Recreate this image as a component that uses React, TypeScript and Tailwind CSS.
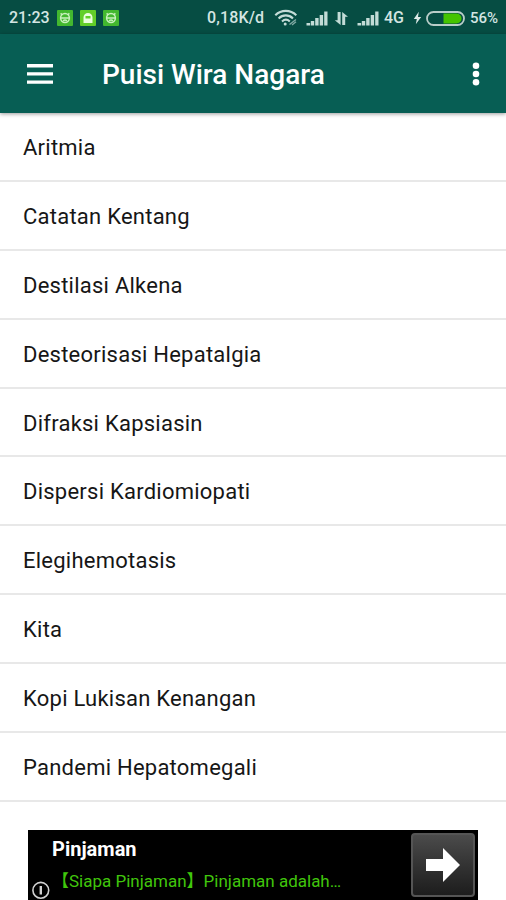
const POEMS = [
  "Aritmia",
  "Catatan Kentang",
  "Destilasi Alkena",
  "Desteorisasi Hepatalgia",
  "Difraksi Kapsiasin",
  "Dispersi Kardiomiopati",
  "Elegihemotasis",
  "Kita",
  "Kopi Lukisan Kenangan",
  "Pandemi Hepatomegali",
];

function FaceIcon() {
  return (
    <svg width="16" height="16" viewBox="0 0 16 16" fill="none">
      <rect width="16" height="16" rx="1" fill="#43b82f" />
      <g stroke="#c9f0be" strokeWidth="1.5">
        <path d="M3.6 3.4 5.4 5M12.4 3.4 10.6 5" />
        <circle cx="8" cy="8" r="4.4" />
        <path d="M3.5 8h9M6.2 11c.8-1.2 2.8-1.2 3.6 0" />
      </g>
    </svg>
  );
}

function GhostIcon() {
  return (
    <svg width="16" height="16" viewBox="0 0 16 16">
      <rect width="16" height="16" rx="1" fill="#62cf28" />
      <path d="M3.5 13V7.5a4.5 4.5 0 0 1 9 0V13z" fill="#eaffdc" />
      <path d="M5.5 6h5v2.5h-5z" fill="#62cf28" />
    </svg>
  );
}

function WifiIcon() {
  return (
    <svg width="24" height="18" viewBox="0 0 24 18" fill="none" stroke="#c3dcd7">
      <path
        d="M1.3 6.2C7.3.4 16.3.4 22.3 6.2M4.6 9.4c4.2-4 10.2-4 14.4 0M8 12.4c2.4-2.2 5.4-2.2 7.8 0"
        strokeWidth="2.1"
      />
      <circle cx="11.2" cy="15" r="1.5" fill="#c3dcd7" stroke="none" />
      <path d="m15.5 15.5 6.5-5M18 16l4-3.2" strokeWidth="1.4" opacity=".65" />
    </svg>
  );
}

function SignalIcon() {
  return (
    <svg width="22" height="15" viewBox="0 0 22 15" fill="#c3dcd7">
      <path d="M.5 12h3.6v2.5H.5zM4.8 10h3.4v4.5H4.8zM9.2 7h3.4v7.5H9.2zM13.7 4h3.4v10.5h-3.4zM18.2.5h3.3v14h-3.3z" />
    </svg>
  );
}

function DataIcon() {
  return (
    <svg width="15" height="15" viewBox="0 0 15 15" fill="#c3dcd7">
      <path d="M3.6 1h3v13L.8 9.2h2.8zM8.2 14V1L14 5.8h-2.8V14z" />
    </svg>
  );
}

function BoltIcon() {
  return (
    <svg width="9" height="14" viewBox="0 0 9 14" fill="#dce9e6">
      <path d="M5.8.8.8 8h3L2.8 13.2 8.2 6H5z" />
    </svg>
  );
}

function BatteryIcon() {
  return (
    <svg width="39" height="15" viewBox="0 0 39 15">
      <path d="M17.5 2.5h13a5 5 0 0 1 0 10h-13z" fill="#45c400" />
      <rect x="1" y="1" width="37" height="13" rx="6.5" fill="none" stroke="#b9cdc9" strokeWidth="1.8" />
    </svg>
  );
}

function StatusBar() {
  return (
    <div className="flex h-[34px] items-center bg-[#064d43] pt-[2px] pl-[9px] text-[15px] leading-none font-medium whitespace-nowrap text-[#d4e5e2]">
      <span className="w-[48px] text-[16px]">21:23</span>
      <div className="flex w-[150px] gap-[7px]">
        <FaceIcon />
        <GhostIcon />
        <FaceIcon />
      </div>
      <span className="w-[67px] text-[16px] tracking-[0.15px]">0,18K/d</span>
      <span className="w-[32px]"><WifiIcon /></span>
      <span className="w-[28px]"><SignalIcon /></span>
      <span className="w-[23px]"><DataIcon /></span>
      <span className="w-[27px]"><SignalIcon /></span>
      <span className="w-[29px] text-[16px]">4G</span>
      <span className="w-[13px]"><BoltIcon /></span>
      <span className="w-[44px]"><BatteryIcon /></span>
      <span>56%</span>
    </div>
  );
}

function AppBar() {
  return (
    <header className="relative flex h-[79px] items-center bg-[#075e54] pr-[26px] pl-[27px] text-white shadow-[0_1px_4px_rgba(0,0,0,0.4)]">
      <svg width="26" height="20" viewBox="0 0 26 20" fill="white">
        <path d="M0 0h26v3.4H0zM0 8.2h26v3.4H0zM0 16.4h26v3.4H0z" />
      </svg>
      <h1 className="ml-[49px] flex-1 pt-[3px] text-[28px] leading-none font-medium">
        Puisi Wira Nagara
      </h1>
      <svg width="8" height="24" viewBox="0 0 8 24" fill="white">
        <circle cx="4" cy="3.8" r="3.3" />
        <circle cx="4" cy="12" r="3.3" />
        <circle cx="4" cy="20.3" r="3.3" />
      </svg>
    </header>
  );
}

function AdBanner() {
  return (
    <div className="mx-7 flex h-[70px] justify-between overflow-hidden bg-black">
      <div className="flex">
        <svg width="18" height="18" viewBox="0 0 18 18" fill="none" stroke="#d2d2d2" className="mt-[51px] ml-[4px]">
          <circle cx="8.8" cy="9.3" r="7.9" strokeWidth="1.6" />
          <path d="M8.8 5v8.5" strokeWidth="2.4" />
        </svg>
        <div className="ml-[2px] whitespace-nowrap">
          <p className="mt-[8px] text-[20px] leading-[22px] font-bold text-white">Pinjaman</p>
          <p className="mt-[10px] font-[Roboto,'Noto_Sans_CJK_SC',sans-serif] text-[17px] leading-[22px] text-[#40c60c]">
            【Siapa Pinjaman】Pinjaman adalah…
          </p>
        </div>
      </div>
      <button className="mt-[3px] mr-[3px] flex h-[64px] w-[64px] items-center justify-center rounded-[4px] border-2 border-[#555] bg-linear-to-b from-[#4b4b4b] to-[#1d1d1d]">
        <svg width="34" height="34" viewBox="0 0 34 34" fill="white">
          <path d="M0 11h17V0l17 17-17 17V23H0z" />
        </svg>
      </button>
    </div>
  );
}

export default function App() {
  return (
    <div className="flex h-[900px] w-[506px] flex-col overflow-hidden bg-white font-[Roboto,sans-serif]">
      <StatusBar />
      <AppBar />
      <ul className="h-[689px]">
        {POEMS.map((title) => (
          <li
            key={title}
            className="flex h-[68.9px] items-center border-b-2 border-[#e8e8e8] pt-[3px] pl-[23px] text-[22px] leading-none tracking-[0.24px] text-[#161616]"
          >
            {title}
          </li>
        ))}
      </ul>
      <div className="h-[28px] shrink-0" />
      <AdBanner />
    </div>
  );
}
